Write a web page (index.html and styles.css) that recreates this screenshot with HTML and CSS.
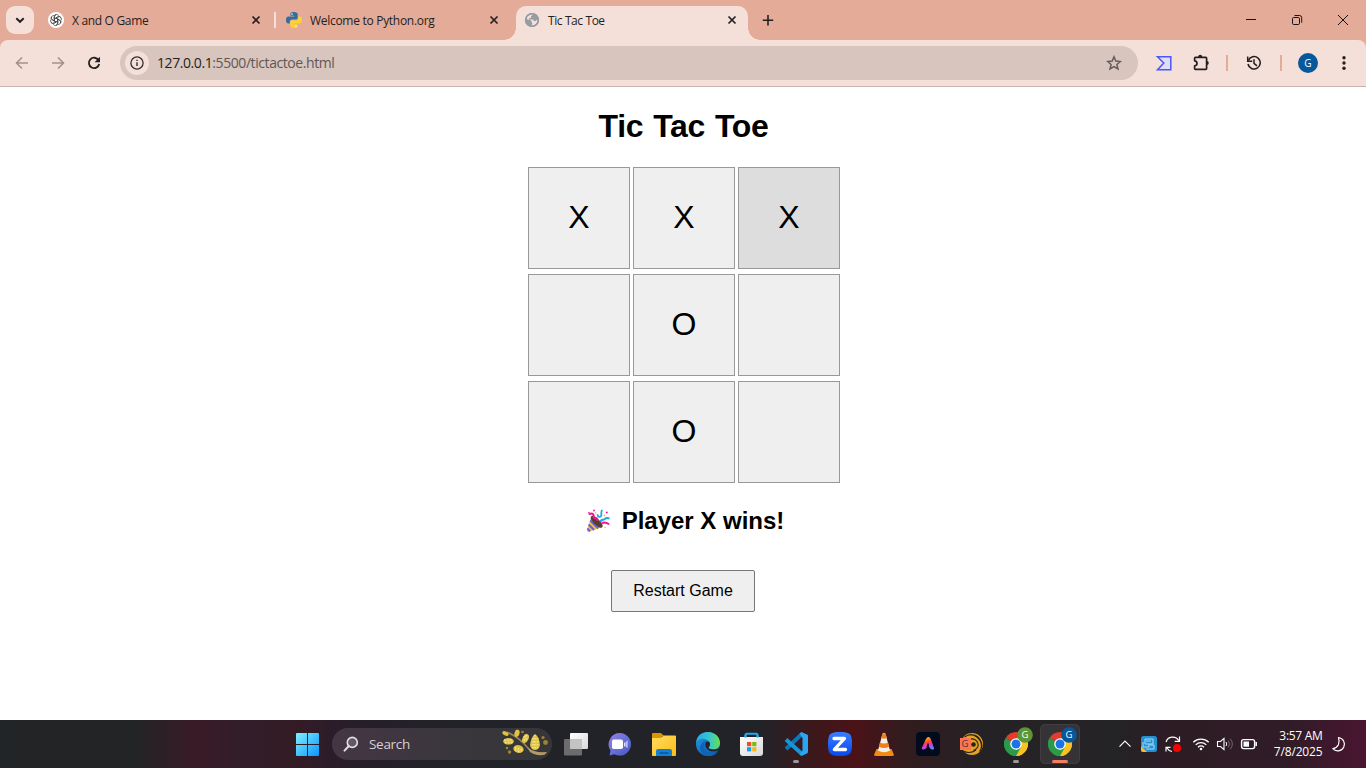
FILE: index.html
```html
<!DOCTYPE html>
<html lang="en">
<head>
<meta charset="utf-8">
<title>Tic Tac Toe</title>
<link rel="stylesheet" href="styles.css">
</head>
<body>
<svg class="defs" width="0" height="0">
  <defs>
    <linearGradient id="win" x1="0" y1="0" x2="1" y2="1"><stop offset="0" stop-color="#7ff0ff"/><stop offset="1" stop-color="#0a96fb"/></linearGradient>
    <linearGradient id="chat" x1="0" y1="0" x2="1" y2="1"><stop offset="0" stop-color="#9a7fe0"/><stop offset=".5" stop-color="#6870d8"/><stop offset="1" stop-color="#4a52c0"/></linearGradient>
    <linearGradient id="folder" x1="0" y1="0" x2="1" y2="1"><stop offset="0" stop-color="#ffdc62"/><stop offset="1" stop-color="#fbbd14"/></linearGradient>
    <linearGradient id="edgeTop" x1="0" y1="0" x2="1" y2="0"><stop offset="0" stop-color="#2aa8e8"/><stop offset=".55" stop-color="#35c6d0"/><stop offset="1" stop-color="#68e04c"/></linearGradient>
    <linearGradient id="edgeLow" x1="0" y1="0" x2="1" y2="1"><stop offset="0" stop-color="#229ce4"/><stop offset="1" stop-color="#0c50a4"/></linearGradient>
    <linearGradient id="glass" x1="0" y1="0" x2="1" y2="1"><stop offset="0" stop-color="#fff"/><stop offset="1" stop-color="#d8d8d8"/></linearGradient>
    <linearGradient id="rainbow" gradientUnits="userSpaceOnUse" x1="20" y1="18" x2="25" y2="31"><stop offset="0" stop-color="#ffb01c"/><stop offset=".3" stop-color="#ff4a2c"/><stop offset=".55" stop-color="#e434d0"/><stop offset=".8" stop-color="#6b74ff"/><stop offset="1" stop-color="#2be0a0"/></linearGradient>
    <linearGradient id="zoomBlue" x1="0" y1="0" x2="0" y2="1"><stop offset="0" stop-color="#3b7dff"/><stop offset="1" stop-color="#0649ef"/></linearGradient>
    <symbol id="x" viewBox="0 0 16 16"><path d="M4.500 4.500l7 7M11.500 4.500l-7 7" fill="none" stroke="#241f20" stroke-width="1.700"/></symbol>
    <symbol id="chrome" viewBox="0 0 24 24">
      <path d="M12 12L1.610 6A12 12 0 0 1 22.390 6Z" fill="#e33b2e"/>
      <path d="M12 12L22.390 6A12 12 0 0 1 12 24Z" fill="#fcc31e"/>
      <path d="M12 12V24A12 12 0 0 1 1.610 6Z" fill="#2b9b49"/>
      <path d="M12 6.200h10.500A12 12 0 0 1 12 24l5-9Z" fill="#fcc31e"/>
      <path d="M1.610 6l5.400 9 5 3 5-3L12 24A12 12 0 0 1 1.610 6Z" fill="#2b9b49"/>
      <circle cx="12" cy="12" r="5.800" fill="#fff"/><circle cx="12" cy="12" r="4.500" fill="#1b73e8"/>
    </symbol>
  </defs>
</svg>

<header class="tabstrip">
  <div class="tab-search"><svg width="16" height="16" viewBox="0 0 16 16"><path d="M4.300 6.200L8 9.800l3.700-3.600" fill="none" stroke="#241f20" stroke-width="1.900"/></svg></div>
  <div class="tab first">
    <svg class="favicon" viewBox="0 0 16 16"><circle cx="8" cy="8" r="8" fill="#fff"/><g fill="none" stroke="#3c3c3c" stroke-width=".75"><path id="petal" d="M6.300 9V4.900q0-2.300 2.200-2.400 1.400 0 2.300 1.200M6.300 6.900l3.500-2q2-1 3.100.6"/><use href="#petal" transform="rotate(60 8 8)"/><use href="#petal" transform="rotate(120 8 8)"/><use href="#petal" transform="rotate(180 8 8)"/><use href="#petal" transform="rotate(240 8 8)"/><use href="#petal" transform="rotate(300 8 8)"/></g></svg>
    <span class="tab-title t1">X and O Game</span>
    <svg class="close" width="16" height="16"><use href="#x"/></svg>
  </div>
  <span class="tab-divider"></span>
  <div class="tab second">
    <svg class="favicon" viewBox="0 0 16 16"><path d="M7.900 0C4.500 0 4.400 1.200 4.400 2v1.800h3.800v.8H2.600C.8 4.600 0 6 0 8s.8 3.600 2.300 3.600h1.500V9.800c0-1.400 1-2.200 2.200-2.200h4c1 0 1.700-.8 1.700-1.800V2.400C11.700 1 10.600 0 7.900 0Z" fill="#326d9f"/><path d="M8.100 16c3.400 0 3.500-1.200 3.500-2v-1.800H7.800v-.8h5.600C15.200 11.400 16 10 16 8s-.8-3.600-2.300-3.600h-1.500v1.800c0 1.400-1 2.200-2.200 2.200H6c-1 0-1.700.8-1.700 1.800v3.400c0 1.400 1.100 2.400 3.800 2.400Z" fill="#ffd22e"/><circle cx="6" cy="2" r=".8" fill="#fff"/><circle cx="10" cy="14" r=".8" fill="#fff"/></svg>
    <span class="tab-title t2">Welcome to Python.org</span>
    <svg class="close" width="16" height="16"><use href="#x"/></svg>
  </div>
  <div class="tab active">
    <svg class="favicon" viewBox="0 0 16 16"><circle cx="8" cy="8" r="7.100" fill="#969ca2"/><path d="M9.300 2.300L7 4.200l-.1 1.700H5.200v1.600h3.900l.8 1.500 1.600.1 1.200-1.200 1-.1c0 1.500-.5 2.700-1.400 3.800-1.100 1.300-2.600 2-4.200 2l-.7-.1 1-2.400-.9-.8.1-1.300-1.300-1.100-3.600-.7C2.600 4.400 5.500 1.700 9.300 2.300Z" fill="#f5e0d9"/><circle cx="8" cy="8" r="6.300" fill="none" stroke="#969ca2" stroke-width="1.500"/></svg>
    <span class="tab-title t3">Tic Tac Toe</span>
    <svg class="close" width="16" height="16"><use href="#x"/></svg>
  </div>
  <svg class="new-tab" width="16" height="16"><path d="M8 3v10.500M2.800 8.200h10.400" stroke="#241f20" stroke-width="1.600"/></svg>
  <div class="window-controls">
    <svg viewBox="0 0 46 40"><path d="M18 19.500h10" stroke="#151515"/></svg>
    <svg viewBox="0 0 46 40"><rect x="18.500" y="17.500" width="7" height="7" rx="1.200" fill="none" stroke="#151515"/><path d="M20.500 15.500h5a2.200 2.200 0 0 1 2.200 2.200v5" fill="none" stroke="#151515"/></svg>
    <svg viewBox="0 0 46 40"><path d="M18 15l10 10M28 15L18 25" stroke="#151515"/></svg>
  </div>
</header>

<nav class="toolbar-back"><div class="toolbar">
  <svg class="tool" viewBox="0 0 36 36"><path d="M24 18H13M18 12.500L12.500 18l5.500 5.500" fill="none" stroke="#a3918e" stroke-width="1.600"/></svg>
  <svg class="tool" viewBox="0 0 36 36"><path d="M12 18h11M18 12.500l5.500 5.500-5.500 5.500" fill="none" stroke="#a3918e" stroke-width="1.600"/></svg>
  <svg class="tool" viewBox="0 0 36 36"><path d="M22.600 15.300A5.200 5.200 0 1 0 23.200 19" fill="none" stroke="#241f20" stroke-width="1.800"/><path d="M24 11.800v5.400h-5.400Z" fill="#241f20"/></svg>
  <div class="omnibox">
    <span class="info"><svg width="16" height="16" viewBox="0 0 16 16"><circle cx="8" cy="8" r="6.100" fill="none" stroke="#332e2e" stroke-width="1.300"/><path d="M8 7.200V11M8 4.700v1.400" stroke="#332e2e" stroke-width="1.400"/></svg></span>
    <span class="url"><b>127.0.0.1</b>:5500/tictactoe.html</span>
    <svg class="star" width="16" height="16" viewBox="0 0 16 16"><path d="M8 1.800l1.800 4.300 4.600.4-3.500 3 1.100 4.500L8 11.600 4 14l1.100-4.500-3.500-3 4.600-.4Z" fill="none" stroke="#655c5b" stroke-width="1.500"/></svg>
  </div>
  <svg class="tool" viewBox="0 0 36 36"><path d="M11.500 11.700h13.300v13H11.500L17.800 18Z" fill="#e0dcf9" stroke="#4659f5" stroke-width="1.500"/></svg>
  <svg class="tool" viewBox="0 0 36 36"><path d="M13.500 12.300h10.200q.9 0 .9.900v10.200q0 .9-.9.900H13.500q-.9 0-.9-.9v-2.600c3.200-.2 3.200-4.800 0-5v-2.600q0-.9.900-.9Z" fill="none" stroke="#241f20" stroke-width="1.700" stroke-linejoin="round"/><path d="M16.200 12v-.3a2 2 0 0 1 4 0v.3ZM24.800 16a2 2 0 0 1 0 4Z" fill="#241f20"/></svg>
  <span class="tool-divider"></span>
  <svg class="tool" viewBox="0 0 36 36"><path d="M12.300 15.500A6.200 6.200 0 1 1 12 19" fill="none" stroke="#241f20" stroke-width="1.600"/><path d="M11.700 11.600v4.600h4.600M18 14.200v4.200l3 2.500" fill="none" stroke="#241f20" stroke-width="1.500"/></svg>
  <span class="tool-divider"></span>
  <span class="tool profile"><span class="avatar">G</span></span>
  <svg class="tool" viewBox="0 0 36 36" fill="#241f20"><circle cx="18" cy="12.800" r="1.700"/><circle cx="18" cy="18" r="1.700"/><circle cx="18" cy="23.200" r="1.700"/></svg>
</div></nav>

<main class="page">
  <h1>Tic Tac Toe</h1>
  <div class="board">
    <button class="cell">X</button><button class="cell">X</button><button class="cell hovered">X</button>
    <button class="cell"></button><button class="cell">O</button><button class="cell"></button>
    <button class="cell"></button><button class="cell">O</button><button class="cell"></button>
  </div>
  <h2><svg class="party" width="24" height="24" viewBox="0 0 24 24"><path d="M5 9L.9 21Q.6 23 2.800 22.800L15 18.500Z" fill="#f5bb4b"/><path d="M4.200 11.500l8 8M2.600 15.500l5.500 5.500M1.400 19.500l2.700 2.900" stroke="#5865e8" stroke-width="1.900"/><path d="M5 7.500c2-2 5 .5 7.500 3s5.500 6 3.500 8c-2 1-4.500-.7-7.500-3.500S4 9 5 7.500Z" fill="#5b3c31"/><path d="M3.500 6c.5-2 3.500-2 4 0s-.5 3.500 1.800 3.300 2.200 1.500 2.200 2.700" fill="none" stroke="#f01692" stroke-width="2"/><path d="M11.500 5.300c0 3 3.300 3.500 3.800.8.300-1.500-.5-3 .7-5.300" fill="none" stroke="#1da6e6" stroke-width="1.800"/><path d="M14.500 13c0-3 2.800-1.800 4-2.800s2-2 5-.5" fill="none" stroke="#1da6e6" stroke-width="2"/><path d="M16 14.500c2-2.200 4.500-1 7.200.8" fill="none" stroke="#f01692" stroke-width="1.900"/><g fill="#f01692"><circle cx="8" cy="1.500" r=".9"/><circle cx="3" cy="3.800" r=".9"/><circle cx="20.800" cy="3.500" r="1"/></g><g fill="#f5bb4b"><circle cx="9.600" cy="3.700" r=".8"/><circle cx="18.500" cy="6.500" r=".9"/><circle cx="19" cy="18.500" r=".8"/></g></svg><span>Player X wins!</span></h2>
  <button class="restart">Restart Game</button>
</main>

<footer class="taskbar">
  <svg class="app" viewBox="0 0 44 48"><path fill="url(#win)" d="M11 14q0-1 1-1h10v11H11ZM23 13h10q1 0 1 1v10H23ZM11 25h11v11H12q-1 0-1-1ZM23 25h11v10q0 1-1 1H23Z"/></svg>
  <div class="search">
    <svg width="16" height="16" viewBox="0 0 16 16"><circle cx="9.300" cy="6.400" r="5" fill="#605963" stroke="#e4e0e4" stroke-width="1.600"/><path d="M5.600 10.300L1.500 14.600" stroke="#e4e0e4" stroke-width="2" stroke-linecap="round"/></svg>
    <span>Search</span>
    <svg class="branch" width="48" height="30" viewBox="0 0 48 30"><path d="M5 3Q18 9 25 18t18 7" fill="none" stroke="#95825b" stroke-width="1.700"/><path d="M26 19q7 5 18 4l1 1q-9 5-17-1" fill="#b49b65"/><g fill="#dfc147"><ellipse cx="3.500" cy="4.500" rx="3.300" ry="2" transform="rotate(25 3.500 4.500)"/><ellipse cx="15" cy="4.300" rx="2.500" ry="3.800" transform="rotate(15 15 4.300)"/><ellipse cx="6.500" cy="12.300" rx="5.300" ry="3.300"/><ellipse cx="23.500" cy="9.500" rx="3" ry="4.800" transform="rotate(25 23.500 9.500)"/><ellipse cx="16.500" cy="20" rx="5.300" ry="3.800" transform="rotate(15 16.500 20)"/><path d="M33 5q4.500 3 5 11-1 5-5 5t-5-5q1-8 5-11Z"/></g><g fill="none" stroke="#f3e681" stroke-width="1.600" stroke-dasharray="1.500 1.500"><path d="M2 11h9M3 13.500h8M13 18.500l8 3M13 21l6 2M31 9v10M33 6v14M35.500 9v10M22.500 7v6M24.500 6v6"/></g><g fill="#9e8436"><circle cx="20.500" cy="3" r="1.300"/><circle cx="5" cy="19" r="1.300"/><circle cx="7.500" cy="23" r="1.700"/><circle cx="41" cy="8.500" r="1.600"/><circle cx="43.500" cy="13.500" r="2.400"/></g></svg>
  </div>
  <svg class="app" viewBox="0 0 44 48"><rect x="16" y="13" width="18" height="16" rx="1" fill="url(#glass)"/><rect x="10" y="19" width="18" height="16.500" rx="1" fill="#6c6c6c"/><path d="M16 19h12v10H16Z" fill="#c3c3c3"/></svg>
  <svg class="app" viewBox="0 0 44 48"><path d="M22 13a11.300 11.300 0 1 1-5.500 21.300l-5 1.200 1-5A11.300 11.300 0 0 1 22 13Z" fill="url(#chat)"/><rect x="14" y="19.500" width="11" height="9.500" rx="1.800" fill="#fff"/><path d="M26 23l1.500-1v5L26 26ZM28.300 21.500l1.200-1v7.500l-1.200-1Z" fill="#e4e2fb"/></svg>
  <svg class="app" viewBox="0 0 44 48"><path d="M10 14q0-1 1-1h8l3 3h-2v4H10Z" fill="#dc9400"/><path d="M10 18h9l2.500-2.500H33q1 0 1 1V35q0 1-1 1H11q-1 0-1-1Z" fill="url(#folder)"/><path d="M14 36v-5q0-2 2-2h12q2 0 2 2v5Z" fill="#1280d4"/><path d="M17.500 33h9" stroke="#0756a1" stroke-width="1.500"/></svg>
  <svg class="app" viewBox="0 0 44 48"><circle cx="22" cy="24" r="12" fill="url(#edgeLow)"/><path d="M10.200 22C11 15.500 16 12 22 12c7 0 12 5 12 11 0 4-3 6.500-7 6.500-3 0-4.500-1.200-4.500-2 1.700-1.400 2-3.200 1-5.200-2.300-4.300-9.500-5-13.300-.3Z" fill="url(#edgeTop)"/><path d="M20 21c-3 3-2 9 2.500 11.500 3.500 2 7 1 9.500-.8-2 2.800-5.500 4.300-9 4.300-6 0-9-4-9-8 0-3.500 2.500-6.500 6-7Z" fill="#0e65b8"/><path d="M20.500 21.500c-2 2-1.500 6 1.500 8.200 3 2.200 8 2 11-.3l.6-1.400c-2 1.400-4.500 1.600-6.600 1.500-3 0-4.500-1.200-4.500-2 2-2 1.700-4.300.6-5.800Z" fill="#222328"/></svg>
  <svg class="app" viewBox="0 0 44 48"><path d="M15.500 20v-5q0-1.300 1.300-1.300h9.400q1.300 0 1.300 1.300v5" fill="none" stroke="#24a9ed" stroke-width="1.900"/><path d="M10 17h23v16q0 3-3 3H13q-3 0-3-3Z" fill="url(#glass)"/><path d="M15.500 14.500v3M27.500 14.500v3" stroke="#24a9ed" stroke-width="2"/><path d="M17 22h4.200v4.200H17Z" fill="#eb4f26"/><path d="M22.200 22h4.200v4.200h-4.200Z" fill="#7fb916"/><path d="M17 27.200h4.200v4.200H17Z" fill="#169fe8"/><path d="M22.200 27.200h4.200v4.200h-4.200Z" fill="#fab710"/></svg>
  <svg class="app" viewBox="0 0 44 48"><path d="M12 29L28 14" stroke="#0878bd" stroke-width="4"/><path d="M12 19.500L28 34" stroke="#1496dc" stroke-width="4"/><path d="M27.500 12l6 2.700Q34 15 34 16v16q0 1-.7 1.300L27.500 36l-2-1.500 3-4V18l-3-4.500Z" fill="#29a7f2"/><rect x="19" y="40" width="6" height="3" rx="1.500" fill="#9e9699"/></svg>
  <svg class="app" viewBox="0 0 44 48"><path d="M22 12c10 0 12 2 12 12s-2 12-12 12-12-2-12-12 2-12 12-12Z" fill="url(#zoomBlue)"/><path d="M16 18.500h10.500L16.300 29.500H27.500" fill="none" stroke="#fff" stroke-width="3.300" stroke-linecap="round" stroke-linejoin="round"/></svg>
  <svg class="app" viewBox="0 0 44 48"><path d="M14.500 29h15l2.300 5.500q0 1.500-1.500 1.500H13.700q-1.800 0-1.500-1.500Z" fill="#f58a13"/><path d="M20.600 13.500q1.400-1.500 2.800 0L28 30.500q-6 3.500-12 0Z" fill="#f4f0ea"/><path d="M20.200 14.500q1.800-3 3.600 0l1 3.500q-2.800 1.600-5.600 0ZM17.900 22.500q4 2 8.200 0l1.200 4q-5.300 3-10.600 0Z" fill="#f37e15"/></svg>
  <svg class="app" viewBox="0 0 44 48"><rect x="10" y="12" width="24" height="24" rx="4" fill="#020a1d"/><path d="M17 28.300q2.500 0 3.200-2.300l1.800-5.500 1.600 4.500q.9 3.300 3.200 3.300L23.700 19.500q-1.200-2.500-2.700 0Z" fill="url(#rainbow)" stroke="url(#rainbow)" stroke-width="2.400" stroke-linejoin="round"/><path d="M22 22.500l1 2.700-2.700 2.300Z" fill="#020a1d"/></svg>
  <div class="app"><svg viewBox="0 0 44 48"><circle cx="22" cy="24" r="11" fill="#e6a321"/><g fill="none" stroke="#292224" stroke-width="1.100"><path d="M14.500 17q7-5 13 .500t3 13M17 15.500q9-2.500 13 4t-.500 12M18 19.500q7-2 9.500 3t-4 8M13 31q7 3.500 13-1"/></g><circle cx="23.500" cy="24.500" r="2.300" fill="#292224"/><path d="M10 18h11v12H10Z" fill="#fa7553"/></svg><span class="square-letter">G</span></div>
  <div class="app"><svg viewBox="0 0 44 48"><use href="#chrome" x="10" y="12" width="24" height="24"/><circle cx="31" cy="15" r="7.800" fill="#5e9636"/><rect x="19" y="40" width="6" height="3" rx="1.500" fill="#9e9699"/></svg><span class="letter">G</span></div>
  <div class="app"><svg viewBox="0 0 44 48"><rect x="2.500" y="4.500" width="39" height="39" rx="4" fill="#353336" stroke="#413e41"/><use href="#chrome" x="10" y="12" width="24" height="24"/><circle cx="31" cy="15" r="7.800" fill="#07589b"/><rect x="14" y="40" width="16" height="3" rx="1.500" fill="#f57d62"/></svg><span class="letter">G</span></div>
  <div class="tray">
    <svg viewBox="0 0 24 24"><path d="M6.500 14.700L12 9.200l5.500 5.500" fill="none" stroke="#fff" stroke-width="1.200"/></svg>
    <svg viewBox="0 0 24 24"><rect x="4" y="4" width="16" height="16" rx="2.500" fill="#2290d2"/><path d="M4 14l6 6H6q-2 0-2-2Z" fill="#f4bd35"/><path d="M8 7h8v5H8ZM6 10v5h6M12 12v3m-3 2h8v-4h-4M9 9h5" fill="none" stroke="#a9dcf5" stroke-width="1"/></svg>
    <svg viewBox="0 0 24 24"><path d="M5 10a7 7 0 0 1 12.700-1.500M18.500 4.500v4.800h-4.800M5 19.500v-4.200h4.500M6 16a7 7 0 0 0 5 3.500" fill="none" stroke="#fff" stroke-width="1.200"/><circle cx="16" cy="16" r="4" fill="#f50404"/></svg>
    <svg class="wifi" viewBox="0 0 24 24"><path d="M4.300 10.300a11 11 0 0 1 15.400 0M6.700 12.900a7.500 7.500 0 0 1 10.600 0M9 15.200a4.300 4.300 0 0 1 6 0" fill="none" stroke="#fff" stroke-width="1.300"/><circle cx="12" cy="17" r="1.300" fill="#fff"/></svg>
    <svg viewBox="0 0 24 24"><path d="M4.500 9.500h3L11 6.400v11.200l-3.500-3.100h-3Z" fill="none" stroke="#fff" stroke-width="1.100"/><path d="M13 10q1.500 2 0 4" fill="none" stroke="#fff"/><path d="M15.200 8.500q2.700 3.500 0 7M17.300 6.700q4 5.300 0 10.600" fill="none" stroke="#75676e"/></svg>
    <svg viewBox="0 0 24 24"><rect x="4.600" y="7.600" width="13" height="9" rx="2" fill="none" stroke="#fff" stroke-width="1.400"/><rect x="6.500" y="9.500" width="5.500" height="5.200" fill="#fff"/><path d="M19.200 10v4" stroke="#fff" stroke-width="1.500"/></svg>
    <div class="clock"><span class="time">3:57 AM</span><span class="date">7/8/2025</span></div>
    <svg class="moon" viewBox="0 0 24 24"><path d="M11.500 5.500a6.700 6.700 0 1 1-5.700 11.200q4.200-1 5.600-4 1.400-3.200.100-7.200Z" fill="none" stroke="#fff" stroke-width="1.200" stroke-linejoin="round"/></svg>
  </div>
</footer>
</body>
</html>
```
FILE: styles.css
```css
* { box-sizing: border-box; }
body {
  margin: 0;
  width: 1366px;
  height: 768px;
  overflow: hidden;
  display: flex;
  flex-direction: column;
  background: #fff;
  font-family: "Open Sans", "Noto Sans", sans-serif;
}
.defs { position: absolute; }
svg { display: block; flex: none; }

.tabstrip {
  height: 40px;
  flex: none;
  display: flex;
  align-items: center;
  padding-left: 6px;
  background: #e4ab99;
  color: #241f20;
}
.tab-search {
  width: 28px;
  height: 28px;
  border-radius: 9px;
  background: #f5e0d9;
  display: grid;
  place-items: center;
}
.tab { display: flex; align-items: center; }
.favicon { width: 16px; height: 16px; }
.tab-title { margin-left: 8px; font-size: 12px; white-space: nowrap; line-height: 16px; padding-top: 2px; }
.close { margin-left: auto; }
.first { margin-left: 14px; width: 216px; }
.tab-divider { width: 2px; height: 16px; margin-left: 10px; background: #f5e0d9; }
.second { margin-left: 10px; width: 216px; }
.t1 { letter-spacing: -0.32px; }
.t2 { letter-spacing: -0.29px; }
.t3 { letter-spacing: -0.47px; word-spacing: 0.3px; }
.active {
  align-self: flex-end;
  position: relative;
  margin-left: 14px;
  width: 232px;
  height: 34px;
  padding: 0 8px 6px;
  border-radius: 10px 10px 0 0;
  background: #f5e0d9;
}
.active::before, .active::after {
  content: "";
  position: absolute;
  bottom: 0;
  width: 12px;
  height: 12px;
}
.active::before { right: 100%; background: radial-gradient(circle at 0 0, transparent 11.5px, #f5e0d9 12px); }
.active::after { left: 100%; background: radial-gradient(circle at 100% 0, transparent 11.5px, #f5e0d9 12px); }
.new-tab { margin-left: 12px; }
.window-controls { margin-left: auto; display: flex; }
.window-controls svg { width: 46px; height: 40px; }

.toolbar-back { height: 47px; flex: none; background: #e4ab99; }
.toolbar {
  height: 47px;
  display: flex;
  align-items: center;
  padding: 0 4px;
  background: #f5e0d9;
  border-bottom: 1px solid #c5b4ae;
  border-radius: 8px 8px 0 0;
}
.tool { width: 36px; height: 36px; }
.omnibox {
  width: 1018px;
  height: 34px;
  margin: 0 8px;
  padding: 0 16px 0 5px;
  border-radius: 17px;
  background: #d7c5be;
  display: flex;
  align-items: center;
}
.info {
  width: 24px;
  height: 24px;
  border-radius: 50%;
  background: #f5e0d9;
  display: grid;
  place-items: center;
}
.url { margin-left: 8px; padding-bottom: 1px; font-size: 14px; letter-spacing: -0.42px; color: #625756; }
.url b { font-weight: 400; color: #241f20; }
.star { margin-left: auto; }
.tool-divider { width: 2px; height: 16px; margin: 0 8px; background: #e4ab99; }
.profile { display: grid; place-items: center; }
.avatar {
  width: 20px;
  height: 20px;
  border-radius: 50%;
  background: #07589b;
  color: #fff;
  font-size: 10px;
  line-height: 20px;
  text-align: center;
}

.page {
  flex: 1;
  display: flex;
  flex-direction: column;
  align-items: center;
  color: #000;
  font-family: "Liberation Sans", Arial, sans-serif;
}
.page button { font-family: inherit; color: #000; }
h1 { margin: 21px 0 22px 1px; font-size: 32px; line-height: 37px; letter-spacing: -0.3px; word-spacing: 1.3px; }
.board {
  display: grid;
  grid-template-columns: repeat(3, 102px);
  grid-auto-rows: 102px;
  gap: 5px 3px;
  margin-left: 2px;
}
.cell { padding: 0 0 2px; border: 1px solid #999; background: #efefef; font-size: 32px; }
.cell.hovered { background: #ddd; }
h2 { display: flex; align-items: center; margin: 24px 0 35px 4px; font-size: 24px; line-height: 28px; }
.party { margin-right: 12px; }
.restart {
  width: 144px;
  height: 42px;
  padding: 0;
  border: 1px solid #767676;
  border-radius: 2px;
  background: #efefef;
  font-size: 16px;
}

.taskbar {
  height: 48px;
  flex: none;
  display: flex;
  align-items: center;
  padding-left: 285px;
  background: linear-gradient(90deg, #222527 0, #222426 135px, #391a26 195px, #311d29 245px, #341b25 295px, #281d2b 350px, #222328 440px, #222328 760px, #3c181b 815px, #4b1217 855px, #331b1e 900px, #252225 980px, #242326 1115px, #2e1c25 1170px, #301c27 1290px, #4a1531 1366px);
}
.app { width: 44px; height: 48px; flex: none; position: relative; }
.app > svg { width: 44px; height: 48px; }
.search {
  width: 220px;
  height: 32px;
  margin: 0 2px 0 3px;
  padding-left: 11px;
  border-radius: 16px;
  background: linear-gradient(90deg, #453644, #39363c 60%, #363639);
  display: flex;
  align-items: center;
  color: #d4d0d4;
  font-size: 13.5px;
  letter-spacing: -0.3px;
}
.search span { margin-left: 10px; }
.branch { margin: 0 2px 0 auto; }
.letter, .square-letter {
  position: absolute;
  color: #fff;
  font-size: 9.5px;
  line-height: 14px;
  text-align: center;
}
.letter { left: 24px; top: 8px; width: 14px; }
.square-letter { left: 9px; top: 17px; width: 12px; color: #56332f; }
.tray { margin-left: auto; padding-right: 15px; display: flex; align-items: center; color: #fff; }
.tray svg { width: 24px; height: 24px; }
.tray .wifi { margin-left: 4px; }
.clock { width: 61.500px; display: flex; flex-direction: column; align-items: flex-end; font-size: 12px; line-height: 16px; white-space: nowrap; }
.time { letter-spacing: -0.3px; }
.date { letter-spacing: -0.15px; }
.tray .moon { margin-left: 4.500px; }
```
